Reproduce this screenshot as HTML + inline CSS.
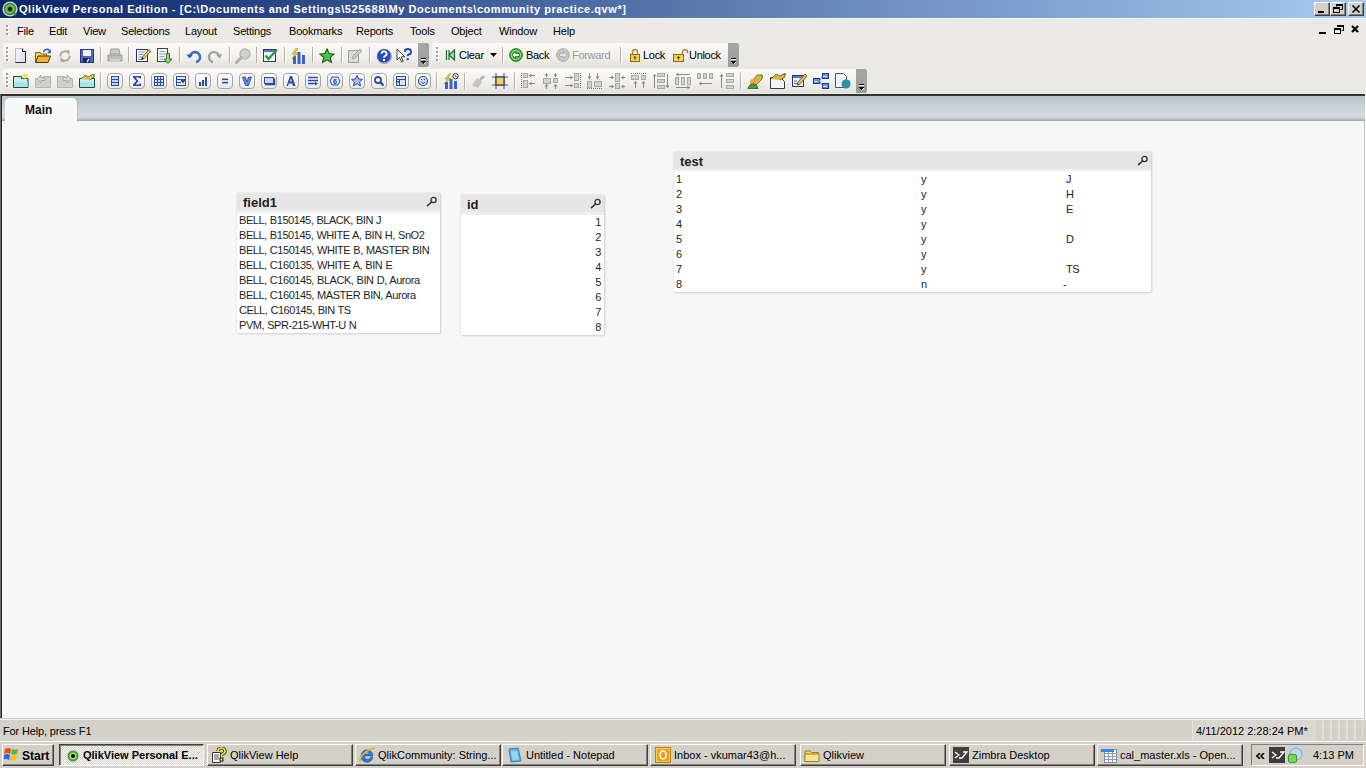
<!DOCTYPE html>
<html><head><meta charset="utf-8">
<style>
*{box-sizing:border-box}
html,body{margin:0;padding:0;width:1366px;height:768px;overflow:hidden;background:#f7f7f7;font-family:"Liberation Sans",sans-serif;font-size:11px;color:#000}
.a{position:absolute}
#title{left:0;top:0;width:1366px;height:18px;background:linear-gradient(to right,#0a246a 0%,#a6caf0 100%)}
#title .t{left:19px;top:3px;color:#fff;font-weight:bold;font-size:11px;line-height:13px;white-space:nowrap;letter-spacing:0.55px}
.cb{top:2px;width:16px;height:14px;background:#d4d0c8;border-top:1px solid #fff;border-left:1px solid #fff;border-right:1px solid #404040;border-bottom:1px solid #404040;box-shadow:inset -1px -1px #808080}
#menu{left:0;top:18px;width:1366px;height:76px;background:linear-gradient(#f4f5ee 0,#f4f5ee 1px,#eceae6 1px,#ebe9e4 100%)}
.mi{top:7px;white-space:nowrap;font-size:11px;letter-spacing:-0.2px}
.tb{height:24px;background:linear-gradient(#fbfaf8,#f0efea 60%,#e3e0d8);border-radius:3px 0 0 3px}
.chev{width:11px;height:24px;background:linear-gradient(#a8a8a8,#8a8a8a);border-radius:0 3px 3px 0}
.grip{width:2px;height:14px;background:repeating-linear-gradient(#9a9a9a 0 2px,transparent 2px 4px)}
.tt{white-space:nowrap;font-size:11px;letter-spacing:-0.3px;line-height:13px}
.sep{width:1px;height:16px;background:#b5b2aa}
#tabs{left:0;top:94px;width:1365px;height:27px;background:linear-gradient(#2a2a2a 0,#3a3a3a 2px,#b6c3cb 2px,#c6d0d6 40%,#d3dadf 75%,#cfd5d9 88%,#a2a6aa 100%)}
#sheet{left:0;top:121px;width:1365px;height:598px;background:#f7f7f7;border-right:1px solid #cacaca;border-bottom:1px solid #cacaca}
#lborder{left:0;top:94px;width:2px;height:624px;background:linear-gradient(to right,#6a6a6a 0,#6a6a6a 1px,#262626 1px)}
#status{left:0;top:719px;width:1366px;height:23px;background:#d4d1c9;border-top:1px solid #f4f3ef;border-bottom:1px solid #f8f8f4}
#task{left:0;top:742px;width:1366px;height:26px;background:#d4d0c8}
.lb{background:#fff;box-shadow:0 0 2px rgba(0,0,0,.12),1px 1px 2px rgba(0,0,0,.12)}
.cap{background:#e6e6e6;font-weight:bold;font-size:13px;color:#222}
.rows{white-space:nowrap;font-size:11px;line-height:15px;color:#1e1e1e;letter-spacing:-0.45px;word-spacing:0.5px}
.capt{font-weight:bold;font-size:13px;line-height:17px;color:#1e1e1e}
.tbtn{top:2px;width:146px;height:22px;background:#d4d0c8;border-top:1px solid #fff;border-left:1px solid #fff;border-right:1px solid #404040;border-bottom:1px solid #404040;box-shadow:inset -1px -1px #808080}
.st{white-space:nowrap;font-size:11px;letter-spacing:-0.3px;line-height:13px}
.tk{white-space:nowrap;font-size:11px;letter-spacing:0;line-height:13px}
.btn{height:22px;top:3px;background:#d4d0c8;border-top:1px solid #fff;border-left:1px solid #fff;border-right:1px solid #404040;border-bottom:1px solid #404040;box-shadow:inset -1px -1px #808080;white-space:nowrap;font-size:11px;padding-left:22px;padding-top:4px;overflow:hidden}
</style></head><body>

<!-- Title bar -->
<div id="title" class="a">
  <svg class="a" style="left:2px;top:1px" width="16" height="16"><circle cx="8" cy="8" r="7.6" fill="#c9d6cf"/><circle cx="8" cy="8" r="6.2" fill="#3d8a2e"/><circle cx="8" cy="8" r="4.6" fill="#8cc46a"/><circle cx="8" cy="8" r="3.2" fill="#4a9a38"/><circle cx="8" cy="8" r="2" fill="#101010"/><path d="M10.5 10.5l3.5 3.5" stroke="#3d8a2e" stroke-width="2"/></svg>
  <div class="t a">QlikView Personal Edition - [C:\Documents and Settings\525688\My Documents\community practice.qvw*]</div>
  <div class="cb a" style="left:1314px"><svg class="a" style="left:0;top:0" width="14" height="12"><rect x="3" y="8" width="6" height="2" fill="#000"/></svg></div>
  <div class="cb a" style="left:1330px"><svg class="a" style="left:0;top:0" width="14" height="12"><path d="M5.5 1.5h6v5h-2M5.5 1.5v2" fill="none" stroke="#000"/><rect x="5" y="1" width="7" height="2" fill="#000"/><rect x="2.5" y="4.5" width="6" height="5" fill="none" stroke="#000"/><rect x="2" y="4" width="7" height="2" fill="#000"/></svg></div>
  <div class="cb a" style="left:1348px"><svg class="a" style="left:0;top:0" width="14" height="12"><path d="M3.5 2.5l7 7M10.5 2.5l-7 7" stroke="#000" stroke-width="1.6"/></svg></div>
</div>

<!-- Menu -->
<div id="menu" class="a">
  <div class="a" style="left:6px;top:7px;width:2px;height:2px;background:#a09d96;box-shadow:1px 1px #fff,0 4px #a09d96,1px 5px #fff,0 8px #a09d96,1px 9px #fff"></div>
  <div class="mi a" style="left:17px">File</div>
  <div class="mi a" style="left:49px">Edit</div>
  <div class="mi a" style="left:83px">View</div>
  <div class="mi a" style="left:121px">Selections</div>
  <div class="mi a" style="left:185px">Layout</div>
  <div class="mi a" style="left:233px">Settings</div>
  <div class="mi a" style="left:289px">Bookmarks</div>
  <div class="mi a" style="left:356px">Reports</div>
  <div class="mi a" style="left:410px">Tools</div>
  <div class="mi a" style="left:451px">Object</div>
  <div class="mi a" style="left:499px">Window</div>
  <div class="mi a" style="left:553px">Help</div>
  <svg class="a" style="left:1316px;top:5px" width="48" height="14"><rect x="3" y="9" width="7" height="2" fill="#000"/><path d="M21.5 2.5h6v5h-2" fill="none" stroke="#000"/><rect x="21" y="2" width="7" height="2" fill="#000"/><rect x="18.5" y="5.5" width="6" height="5" fill="none" stroke="#000"/><rect x="18" y="5" width="7" height="2" fill="#000"/><path d="M36 3l6 6M42 3l-6 6" stroke="#000" stroke-width="2.2"/></svg>
</div>

<!-- Toolbar 1 -->
<div class="tb a" style="left:3px;top:43px;width:415px"></div>
<div class="chev a" style="left:418px;top:43px"></div>
<div class="tb a" style="left:432px;top:43px;width:296px"></div>
<div class="chev a" style="left:728px;top:43px"></div>

<!-- Toolbar 2 -->
<div class="tb a" style="left:3px;top:69px;width:853px"></div>
<div class="chev a" style="left:856px;top:69px"></div>

<svg width="0" height="0" style="position:absolute"><defs><linearGradient id="rb" x1="0" y1="0" x2="0" y2="1"><stop offset="0" stop-color="#ffffff"/><stop offset="1" stop-color="#e4e8f4"/></linearGradient><linearGradient id="pg" x1="0" y1="0" x2="1" y2="1"><stop offset="0" stop-color="#ffffff"/><stop offset="1" stop-color="#d8dcf0"/></linearGradient></defs></svg><div class="a" style="left:418px;top:43px;width:11px;height:24px;background:linear-gradient(#a6a6a6,#9c9c9c);border-radius:0 3px 3px 0"><svg class="a" style="left:0;top:0" width="11" height="24"><rect x="3" y="15" width="5" height="1" fill="#000"/><rect x="3" y="16" width="5" height="1" fill="#fff"/><path d="M2.5 18h6l-3 3z" fill="#000"/><path d="M6 21l2-2" stroke="#fff" stroke-width="1"/></svg></div>
<div class="a" style="left:728px;top:43px;width:11px;height:24px;background:linear-gradient(#a6a6a6,#9c9c9c);border-radius:0 3px 3px 0"><svg class="a" style="left:0;top:0" width="11" height="24"><rect x="3" y="15" width="5" height="1" fill="#000"/><rect x="3" y="16" width="5" height="1" fill="#fff"/><path d="M2.5 18h6l-3 3z" fill="#000"/><path d="M6 21l2-2" stroke="#fff" stroke-width="1"/></svg></div>
<div class="a" style="left:856px;top:69px;width:11px;height:24px;background:linear-gradient(#a6a6a6,#9c9c9c);border-radius:0 3px 3px 0"><svg class="a" style="left:0;top:0" width="11" height="24"><rect x="3" y="15" width="5" height="1" fill="#000"/><rect x="3" y="16" width="5" height="1" fill="#fff"/><path d="M2.5 18h6l-3 3z" fill="#000"/><path d="M6 21l2-2" stroke="#fff" stroke-width="1"/></svg></div>
<svg class="a" style="left:10px;top:48px" width="16" height="16" viewBox="0 0 16 16"><path d="M5.5 0.5h7l3 3v11h-10z" fill="url(#pg)" stroke="#b8b8c0"/><path d="M15.5 3.5v11h-10" fill="none" stroke="#2a2a2a"/><path d="M12.5 0.5v3h3" fill="#fff" stroke="#2a2a2a"/></svg>
<svg class="a" style="left:35px;top:48px" width="16" height="16" viewBox="0 0 16 16"><path d="M0.5 4.5h5l1 1.5h5v8.5h-11z" fill="#f0d46a" stroke="#7a6418"/><path d="M0.5 14.5l2.5-6.5h12.5l-2.5 6.5z" fill="#f2b032" stroke="#4a3408"/><path d="M8.5 4a3.5 3.5 0 0 1 6-1.5" fill="none" stroke="#2858b0" stroke-width="1.5"/><path d="M15.8 1.2v4h-4z" fill="#2858b0"/></svg>
<svg class="a" style="left:57px;top:48px" width="16" height="16" viewBox="0 0 16 16"><path d="M3.5 8.5a4.5 4.5 0 0 1 7.5-4" fill="none" stroke="#ababab" stroke-width="2"/><path d="M9 1.5l4 1.5-1 4z" fill="#a4a4a4"/><path d="M12.5 7.5a4.5 4.5 0 0 1-7.5 4" fill="none" stroke="#ababab" stroke-width="2"/><path d="M7 14.5l-4-1.5 1-4z" fill="#a4a4a4"/></svg>
<svg class="a" style="left:79px;top:48px" width="16" height="16" viewBox="0 0 16 16"><rect x="1.5" y="1.5" width="13" height="13" fill="#4a66c0" stroke="#28388a"/><rect x="4" y="2" width="8" height="6" fill="#eef0fa"/><rect x="4" y="10" width="7" height="4.5" fill="#1e2250"/><path d="M8 14l2-3" stroke="#dde" stroke-width="1.5"/></svg>
<svg class="a" style="left:107px;top:48px" width="16" height="16" viewBox="0 0 16 16"><path d="M4 1h8l1 5h-10z" fill="#c8c8c8" stroke="#9f9f9f"/><path d="M1 7h14v6h-14z" fill="#bdbdbd" stroke="#9f9f9f"/><path d="M3 11h10v3h-10z" fill="#d0d0d0"/></svg>
<svg class="a" style="left:136px;top:48px" width="16" height="16" viewBox="0 0 16 16"><rect x="0.5" y="1.5" width="11" height="12" fill="#f8f9ff" stroke="#2a3460"/><path d="M2.5 4h6M2.5 6.5h5M2.5 9h4M2.5 11.5h3" stroke="#7a8ac0"/><path d="M5.5 11.5l1-2.5 6.5-7.5 1.8 1.6-6.5 7.5z" fill="#f0d070" stroke="#5a4a20" stroke-width="0.8"/><path d="M5.2 12l1.2-2.8 1.7 1.5z" fill="#222"/></svg>
<svg class="a" style="left:157px;top:48px" width="16" height="16" viewBox="0 0 16 16"><rect x="0.5" y="0.5" width="10" height="13" fill="#f8f9ff" stroke="#3a4060"/><path d="M2.5 3.5h6M2.5 6h6M2.5 8.5h5M2.5 11h4" stroke="#8a9ac0"/><path d="M9.5 5.5h3v5.5h2.5l-4 4.5-4-4.5h2.5z" fill="#9ad27a" stroke="#2a6a1a" stroke-width="0.9"/></svg>
<svg class="a" style="left:186px;top:48px" width="16" height="16" viewBox="0 0 16 16"><path d="M4 9a5 5 0 1 1 6 5" fill="none" stroke="#3a6ec8" stroke-width="2.6"/><path d="M0.5 6.5h6.5l-3.5 4z" fill="#2a5ab8"/></svg>
<svg class="a" style="left:207px;top:48px" width="16" height="16" viewBox="0 0 16 16"><path d="M12 9a5 5 0 1 0 -6 5" fill="none" stroke="#9f9f9f" stroke-width="2.4"/><path d="M15.5 6.5h-6.5l3.5 4z" fill="#9f9f9f"/></svg>
<svg class="a" style="left:235px;top:48px" width="16" height="16" viewBox="0 0 16 16"><circle cx="10" cy="6" r="5" fill="#d0d0d0" stroke="#b8b8b8" stroke-width="1.5"/><path d="M6.5 9.5l-5 5" stroke="#b0b0b0" stroke-width="3" stroke-linecap="round"/></svg>
<svg class="a" style="left:263px;top:48px" width="16" height="16" viewBox="0 0 16 16"><rect x="0.5" y="1.5" width="12" height="12" fill="#eef2fb" stroke="#2a3a70"/><rect x="1" y="2" width="11" height="2" fill="#5a7ad0"/><path d="M2.5 7.5l3 3.5 8.5-9.5" fill="none" stroke="#1ea02a" stroke-width="2.2"/></svg>
<svg class="a" style="left:290px;top:48px" width="16" height="16" viewBox="0 0 16 16"><rect x="3" y="8" width="3" height="8" fill="#3a62c8"/><rect x="7.5" y="4" width="3" height="12" fill="#3a62c8"/><rect x="12" y="7" width="3" height="9" fill="#3a62c8"/><path d="M6 0l-4 6h3l-3 5 6-6h-3l3-5z" fill="#f4d23a" stroke="#9a8010" stroke-width="0.5"/></svg>
<svg class="a" style="left:319px;top:48px" width="16" height="16" viewBox="0 0 16 16"><path d="M8 1l2.1 4.6 5 .5-3.8 3.3 1.1 4.9L8 11.8l-4.4 2.5 1.1-4.9L.9 6.1l5-.5z" fill="#4ec24a" stroke="#1d5a1a" stroke-width="1.1"/></svg>
<svg class="a" style="left:347px;top:48px" width="16" height="16" viewBox="0 0 16 16"><rect x="1.5" y="2.5" width="10" height="12" fill="#dcdcdc" stroke="#9f9f9f"/><path d="M5 11l1-3 7-7 2 2-7 7z" fill="#cfcfcf" stroke="#9f9f9f" stroke-width="0.9"/></svg>
<svg class="a" style="left:376px;top:48px" width="16" height="16" viewBox="0 0 16 16"><circle cx="8" cy="8" r="7.3" fill="#2850b8" stroke="#e0e8ff" stroke-width="1"/><circle cx="8.5" cy="8.5" r="7" fill="none" stroke="#1a2a60" stroke-width="0.6" opacity=".6"/><path d="M5.6 5.8a2.5 2.4 0 1 1 3.4 2.2c-.8.4-1 .8-1 1.7" fill="none" stroke="#fff" stroke-width="1.8"/><rect x="7" y="11" width="2" height="2" fill="#fff"/></svg>
<svg class="a" style="left:396px;top:48px" width="16" height="16" viewBox="0 0 16 16"><path d="M1 1v11l2.5-2.5 2 4.5 1.8-.8-2-4.4h3.5z" fill="#fff" stroke="#333" stroke-width="0.9"/><path d="M9 4a3 2.8 0 1 1 3.6 2.6c-.8.4-1 .8-1 1.6" fill="none" stroke="#2850b8" stroke-width="2"/><rect x="10.6" y="10" width="2.2" height="2.2" fill="#2850b8"/></svg>
<div class="a" style="left:100px;top:47px;width:1px;height:16px;background:#b4b1a9;box-shadow:1px 0 #fff"></div>
<div class="a" style="left:128px;top:47px;width:1px;height:16px;background:#b4b1a9;box-shadow:1px 0 #fff"></div>
<div class="a" style="left:179px;top:47px;width:1px;height:16px;background:#b4b1a9;box-shadow:1px 0 #fff"></div>
<div class="a" style="left:229px;top:47px;width:1px;height:16px;background:#b4b1a9;box-shadow:1px 0 #fff"></div>
<div class="a" style="left:256px;top:47px;width:1px;height:16px;background:#b4b1a9;box-shadow:1px 0 #fff"></div>
<div class="a" style="left:284px;top:47px;width:1px;height:16px;background:#b4b1a9;box-shadow:1px 0 #fff"></div>
<div class="a" style="left:312px;top:47px;width:1px;height:16px;background:#b4b1a9;box-shadow:1px 0 #fff"></div>
<div class="a" style="left:341px;top:47px;width:1px;height:16px;background:#b4b1a9;box-shadow:1px 0 #fff"></div>
<div class="a" style="left:369px;top:47px;width:1px;height:16px;background:#b4b1a9;box-shadow:1px 0 #fff"></div>
<div class="a" style="left:6px;top:47px;width:2px;height:2px;background:#a09d96;box-shadow:1px 1px #fff"></div><div class="a" style="left:6px;top:51px;width:2px;height:2px;background:#a09d96;box-shadow:1px 1px #fff"></div><div class="a" style="left:6px;top:55px;width:2px;height:2px;background:#a09d96;box-shadow:1px 1px #fff"></div><div class="a" style="left:6px;top:59px;width:2px;height:2px;background:#a09d96;box-shadow:1px 1px #fff"></div>
<div class="a" style="left:436px;top:47px;width:2px;height:2px;background:#a09d96;box-shadow:1px 1px #fff"></div><div class="a" style="left:436px;top:51px;width:2px;height:2px;background:#a09d96;box-shadow:1px 1px #fff"></div><div class="a" style="left:436px;top:55px;width:2px;height:2px;background:#a09d96;box-shadow:1px 1px #fff"></div><div class="a" style="left:436px;top:59px;width:2px;height:2px;background:#a09d96;box-shadow:1px 1px #fff"></div>
<svg class="a" style="left:445px;top:49px" width="11" height="12" viewBox="0 0 11 12"><path d="M1.5 1v10M4 1v10M4 6l5.5-5v10z" fill="#a8e0a8" stroke="#1a6a2a" stroke-width="1.2"/></svg>
<div class="a tt" style="left:459px;top:49px">Clear</div>
<svg class="a" style="left:490px;top:53px" width="7" height="4"><path d="M0 0h7l-3.5 4z" fill="#000"/></svg>
<div class="a" style="left:502px;top:47px;width:1px;height:16px;background:#b4b1a9;box-shadow:1px 0 #fff"></div>
<svg class="a" style="left:509px;top:48px" width="14" height="14" viewBox="0 0 14 14"><circle cx="7" cy="7" r="6.3" fill="#3cba3c" stroke="#1a6a1a" stroke-width="1"/><circle cx="7" cy="7" r="4.6" fill="none" stroke="#b8f0b0" stroke-width="0.7"/><path d="M3 7l3.5-3.5v2h4v3h-4v2z" fill="#fff" stroke="#1a5a1a" stroke-width="0.7"/></svg>
<div class="a tt" style="left:526px;top:49px">Back</div>
<svg class="a" style="left:556px;top:48px" width="14" height="14" viewBox="0 0 14 14"><circle cx="7" cy="7" r="6.3" fill="#c8c8c8" stroke="#a8a8a8" stroke-width="1"/><path d="M11 7l-3.5-3.5v2h-4v3h4v2z" fill="#e4e4e4" stroke="#a0a0a0" stroke-width="0.7"/></svg>
<div class="a tt" style="left:572px;top:49px;color:#999">Forward</div>
<div class="a" style="left:620px;top:47px;width:1px;height:16px;background:#b4b1a9;box-shadow:1px 0 #fff"></div>
<svg class="a" style="left:629px;top:48px" width="12" height="15" viewBox="0 0 12 15"><path d="M3.5 6.5V4a2.5 2.5 0 0 1 5 0v2.5" fill="none" stroke="#a88a30" stroke-width="1.4"/><rect x="1.5" y="6.5" width="9" height="7" fill="#f4cc50" stroke="#8a6a18"/><path d="M6 8.5v3M4.8 9.7l1.2-1.2 1.2 1.2" stroke="#4a3000" fill="none"/></svg>
<div class="a tt" style="left:643px;top:49px">Lock</div>
<svg class="a" style="left:673px;top:48px" width="16" height="15" viewBox="0 0 16 15"><path d="M9.5 6.5V4a2.5 2.5 0 0 1 5 0v1.5" fill="none" stroke="#a88a30" stroke-width="1.4"/><rect x="0.5" y="6.5" width="10" height="7" fill="#f4cc50" stroke="#8a6a18"/><path d="M5.5 8.5v3M4.3 9.7l1.2-1.2 1.2 1.2" stroke="#4a3000" fill="none"/></svg>
<div class="a tt" style="left:689px;top:49px">Unlock</div>
<div class="a" style="left:6px;top:73px;width:2px;height:2px;background:#a09d96;box-shadow:1px 1px #fff"></div><div class="a" style="left:6px;top:77px;width:2px;height:2px;background:#a09d96;box-shadow:1px 1px #fff"></div><div class="a" style="left:6px;top:81px;width:2px;height:2px;background:#a09d96;box-shadow:1px 1px #fff"></div><div class="a" style="left:6px;top:85px;width:2px;height:2px;background:#a09d96;box-shadow:1px 1px #fff"></div>
<svg class="a" style="left:13px;top:73px" width="16" height="16" viewBox="0 0 16 16"><path d="M0.5 3.5h7.5v1.5h2v-1.5h0v11h-9.5z" fill="#cfeef2" stroke="none"/><path d="M0.5 3.5h8v2h6.5v9h-14.5z" fill="#c8eef0" stroke="#1a4a4a"/><path d="M1 9h13.5v5h-13.5z" fill="#a8e4e8"/><path d="M12 0v6M9 3h6M10 1l4 4M14 1l-4 4" stroke="#f0e040" stroke-width="1.1"/></svg>
<svg class="a" style="left:35px;top:73px" width="16" height="16" viewBox="0 0 16 16"><path d="M0.5 5.5h8v-2h7v11h-15z" fill="#cfcfcf" stroke="#b4b4b4"/><path d="M2 6l4-4v2.5h4v3h-4v2.5z" fill="#d8d8d8" stroke="#a8a8a8"/></svg>
<svg class="a" style="left:57px;top:73px" width="16" height="16" viewBox="0 0 16 16"><path d="M0.5 3.5h7v2h8v9h-15z" fill="#cfcfcf" stroke="#b4b4b4"/><path d="M14 6l-4-4v2.5h-4v3h4v2.5z" fill="#d8d8d8" stroke="#a8a8a8"/></svg>
<svg class="a" style="left:79px;top:73px" width="16" height="16" viewBox="0 0 16 16"><path d="M0.5 5.5h15v9h-15z" fill="#c8eef0" stroke="#1a4a4a"/><path d="M1 9h14v5h-14z" fill="#a8e4e8"/><path d="M2 6l4-4 3 2 5-3 1.5 3-5 3" fill="#d8c060" stroke="#6a5a20" stroke-width="0.8"/><path d="M13 1l2.5 0v3z" fill="#50a040"/></svg>
<div class="a" style="left:100px;top:73px;width:1px;height:16px;background:#b4b1a9;box-shadow:1px 0 #fff"></div>
<svg class="a" style="left:107px;top:73px" width="16" height="16" viewBox="0 0 16 16"><rect x="0.5" y="0.5" width="15" height="15" rx="3.5" fill="url(#rb)" stroke="#a8a49c"/><rect x="4.5" y="3.5" width="7" height="9" fill="#c8d8f8" stroke="#2a4a9a"/><path d="M5 6.5h6M5 9.5h6" stroke="#2a4a9a"/></svg>
<svg class="a" style="left:129px;top:73px" width="16" height="16" viewBox="0 0 16 16"><rect x="0.5" y="0.5" width="15" height="15" rx="3.5" fill="url(#rb)" stroke="#a8a49c"/><path d="M4 3h8v2.5h-1.5l-.5-1h-3.5l3 3.5-3 3.5h3.5l.5-1h1.5v2.5h-8v-1.5l3.2-3.5-3.2-3.5z" fill="#2a4a9a"/></svg>
<svg class="a" style="left:151px;top:73px" width="16" height="16" viewBox="0 0 16 16"><rect x="0.5" y="0.5" width="15" height="15" rx="3.5" fill="url(#rb)" stroke="#a8a49c"/><rect x="3.5" y="3.5" width="9" height="9" fill="#d0e0fc" stroke="#2a4a9a"/><path d="M6.5 3.5v9M9.5 3.5v9M3.5 6.5h9M3.5 9.5h9" stroke="#2a4a9a"/></svg>
<svg class="a" style="left:173px;top:73px" width="16" height="16" viewBox="0 0 16 16"><rect x="0.5" y="0.5" width="15" height="15" rx="3.5" fill="url(#rb)" stroke="#a8a49c"/><rect x="3.5" y="3.5" width="9" height="9" fill="#e0ecfc" stroke="#2a4a9a"/><path d="M4 6.5h8M4 9.5h4" stroke="#2a4a9a"/><path d="M7 6.5h6l-3 4z" fill="#2a4a9a"/></svg>
<svg class="a" style="left:195px;top:73px" width="16" height="16" viewBox="0 0 16 16"><rect x="0.5" y="0.5" width="15" height="15" rx="3.5" fill="url(#rb)" stroke="#a8a49c"/><rect x="4" y="9" width="2" height="4" fill="#2a4a9a"/><rect x="7" y="7" width="2" height="6" fill="#2a4a9a"/><rect x="10" y="4" width="2" height="9" fill="#2a4a9a"/></svg>
<svg class="a" style="left:217px;top:73px" width="16" height="16" viewBox="0 0 16 16"><rect x="0.5" y="0.5" width="15" height="15" rx="3.5" fill="url(#rb)" stroke="#a8a49c"/><rect x="5" y="5.5" width="6" height="1.6" fill="#2a4a9a"/><rect x="5" y="8.8" width="6" height="1.6" fill="#2a4a9a"/></svg>
<svg class="a" style="left:239px;top:73px" width="16" height="16" viewBox="0 0 16 16"><rect x="0.5" y="0.5" width="15" height="15" rx="3.5" fill="url(#rb)" stroke="#a8a49c"/><path d="M3.5 4h3l1.5 5 1.5-5h3l-3 8.5h-3z" fill="#6a86d0" stroke="#2a4a9a" stroke-width="0.8"/></svg>
<svg class="a" style="left:261px;top:73px" width="16" height="16" viewBox="0 0 16 16"><rect x="0.5" y="0.5" width="15" height="15" rx="3.5" fill="url(#rb)" stroke="#a8a49c"/><rect x="3.5" y="4.5" width="9" height="6" fill="#c8d8f8" stroke="#2a4a9a"/><path d="M4 11.5h9.5v-6" stroke="#2a4a9a" fill="none" stroke-width="1.4"/></svg>
<svg class="a" style="left:283px;top:73px" width="16" height="16" viewBox="0 0 16 16"><rect x="0.5" y="0.5" width="15" height="15" rx="3.5" fill="url(#rb)" stroke="#a8a49c"/><path d="M3.5 13l3.5-10h2l3.5 10h-2.5l-.8-2.5h-3.4l-.8 2.5z M7 8.5h2l-1-3z" fill="#2a4a9a" fill-rule="evenodd"/></svg>
<svg class="a" style="left:305px;top:73px" width="16" height="16" viewBox="0 0 16 16"><rect x="0.5" y="0.5" width="15" height="15" rx="3.5" fill="url(#rb)" stroke="#a8a49c"/><path d="M3 4.5h10M3 7.5h10M3 10.5h7" stroke="#2a4a9a" stroke-width="1.6"/><path d="M10 8.5l3 2-3 2z" fill="#2a4a9a"/></svg>
<svg class="a" style="left:327px;top:73px" width="16" height="16" viewBox="0 0 16 16"><rect x="0.5" y="0.5" width="15" height="15" rx="3.5" fill="url(#rb)" stroke="#a8a49c"/><path d="M3 8l2-4h6l2 4-2 4h-6z" fill="#d8e4fc" stroke="#2a4a9a"/><text x="8" y="11" font-size="7" text-anchor="middle" fill="#2a4a9a" font-family="Liberation Sans" font-weight="bold">6</text></svg>
<svg class="a" style="left:349px;top:73px" width="16" height="16" viewBox="0 0 16 16"><rect x="0.5" y="0.5" width="15" height="15" rx="3.5" fill="url(#rb)" stroke="#a8a49c"/><path d="M8 2.5l1.7 3.5 3.8.4-2.9 2.6.9 3.8L8 10.8 4.5 12.8l.9-3.8L2.5 6.4l3.8-.4z" fill="#a8c0f0" stroke="#2a4a9a" stroke-width="1"/></svg>
<svg class="a" style="left:371px;top:73px" width="16" height="16" viewBox="0 0 16 16"><rect x="0.5" y="0.5" width="15" height="15" rx="3.5" fill="url(#rb)" stroke="#a8a49c"/><circle cx="7" cy="7" r="3" fill="#fff" stroke="#2a4a9a" stroke-width="1.8"/><path d="M9 9l3.5 3.5" stroke="#2a4a9a" stroke-width="2.2"/></svg>
<svg class="a" style="left:393px;top:73px" width="16" height="16" viewBox="0 0 16 16"><rect x="0.5" y="0.5" width="15" height="15" rx="3.5" fill="url(#rb)" stroke="#a8a49c"/><rect x="3.5" y="3.5" width="9" height="9" fill="#d8e4fc" stroke="#2a4a9a"/><path d="M3.5 6.5h9M6.5 6.5v6" stroke="#2a4a9a"/><rect x="4" y="8" width="2" height="1.5" fill="#2a4a9a"/></svg>
<svg class="a" style="left:415px;top:73px" width="16" height="16" viewBox="0 0 16 16"><rect x="0.5" y="0.5" width="15" height="15" rx="3.5" fill="url(#rb)" stroke="#a8a49c"/><circle cx="8" cy="8" r="4.5" fill="#d8e4fc" stroke="#2a4a9a" stroke-width="1.2"/><path d="M5.8 8.8a2.4 2.4 0 0 0 4.4 0" fill="none" stroke="#2a4a9a"/><rect x="6" y="6" width="1.2" height="1.2" fill="#2a4a9a"/><rect x="8.8" y="6" width="1.2" height="1.2" fill="#2a4a9a"/></svg>
<div class="a" style="left:436px;top:73px;width:1px;height:16px;background:#b4b1a9;box-shadow:1px 0 #fff"></div>
<svg class="a" style="left:443px;top:73px" width="16" height="16" viewBox="0 0 16 16"><rect x="2" y="9" width="3" height="7" fill="#3a62c8"/><rect x="6.5" y="6" width="3" height="10" fill="#3a62c8"/><rect x="11" y="8" width="3" height="8" fill="#3a62c8"/><path d="M7 0l-5 6h3l-4 5 7-6h-3l3-5z" fill="#f4d23a" stroke="#8a7a10" stroke-width="0.5"/><circle cx="12.5" cy="3.2" r="2.7" fill="#fff" stroke="#222" stroke-width="1"/><path d="M12.5 2v1.5h1" stroke="#222" stroke-width="0.7" fill="none"/></svg>
<div class="a" style="left:464px;top:73px;width:1px;height:16px;background:#b4b1a9;box-shadow:1px 0 #fff"></div>
<svg class="a" style="left:471px;top:73px" width="16" height="16" viewBox="0 0 16 16"><path d="M1 12l5-7 5 4-4 6z" fill="#c4c4c4"/><path d="M8 6l4-4 2 2-4 4z" fill="#b4b4b4"/></svg>
<svg class="a" style="left:492px;top:73px" width="16" height="16" viewBox="0 0 16 16"><path d="M4 0v16M12 0v16M0 4h16M0 12h16" stroke="#3a4ac0" stroke-width="1"/><rect x="4" y="4" width="8" height="8" fill="#f0d060" stroke="#222"/></svg>
<div class="a" style="left:514px;top:73px;width:1px;height:16px;background:#b4b1a9;box-shadow:1px 0 #fff"></div>
<svg class="a" style="left:521px;top:73px" width="16" height="16" viewBox="0 0 16 16"><path d="M0.5 0V16" stroke="#777" stroke-dasharray="1 1"/><rect x="2.5" y="0.5" width="4" height="4" fill="#d2d2d2" stroke="#a8a8a8"/><rect x="2.5" y="7.5" width="4" height="7" fill="#d2d2d2" stroke="#a8a8a8"/><path d="M8 2.5h6" stroke="#8a8a8a"/><path d="M8 2.5l2.5-2v4z" fill="#8a8a8a"/><path d="M8 10.5h6" stroke="#8a8a8a"/><path d="M8 10.5l2.5-2v4z" fill="#8a8a8a"/></svg>
<svg class="a" style="left:543px;top:73px" width="16" height="16" viewBox="0 0 16 16"><path d="M3.5 0v4" stroke="#8a8a8a"/><path d="M3.5 4l-2-2.5h4z" fill="#8a8a8a"/><path d="M12.5 0v4" stroke="#8a8a8a"/><path d="M12.5 4l-2-2.5h4z" fill="#8a8a8a"/><rect x="0.5" y="5.5" width="7" height="5" fill="#d2d2d2" stroke="#a8a8a8"/><rect x="10.5" y="5.5" width="4" height="4" fill="#d2d2d2" stroke="#a8a8a8"/><path d="M3.5 11v5" stroke="#8a8a8a"/><path d="M3.5 11l-2 2.5h4z" fill="#8a8a8a"/><path d="M12.5 11v5" stroke="#8a8a8a"/><path d="M12.5 11l-2 2.5h4z" fill="#8a8a8a"/></svg>
<svg class="a" style="left:565px;top:73px" width="16" height="16" viewBox="0 0 16 16"><path d="M15.5 0V16" stroke="#777" stroke-dasharray="1 1"/><rect x="9.5" y="0.5" width="4" height="7" fill="#d2d2d2" stroke="#a8a8a8"/><rect x="9.5" y="10.5" width="4" height="4" fill="#d2d2d2" stroke="#a8a8a8"/><path d="M0 4.5h8" stroke="#8a8a8a"/><path d="M8 4.5l-2.5-2v4z" fill="#8a8a8a"/><path d="M0 12.5h8" stroke="#8a8a8a"/><path d="M8 12.5l-2.5-2v4z" fill="#8a8a8a"/></svg>
<svg class="a" style="left:587px;top:73px" width="16" height="16" viewBox="0 0 16 16"><path d="M0 15.5H16" stroke="#777" stroke-dasharray="1 1"/><path d="M2.5 0v6" stroke="#8a8a8a"/><path d="M2.5 6l-2-2.5h4z" fill="#8a8a8a"/><path d="M10.5 0v6" stroke="#8a8a8a"/><path d="M10.5 6l-2-2.5h4z" fill="#8a8a8a"/><rect x="0.5" y="8.5" width="4" height="6" fill="#d2d2d2" stroke="#a8a8a8"/><rect x="7.5" y="8.5" width="7" height="5" fill="#d2d2d2" stroke="#a8a8a8"/></svg>
<svg class="a" style="left:609px;top:73px" width="16" height="16" viewBox="0 0 16 16"><rect x="6.5" y="0.5" width="4" height="8" fill="#d2d2d2" stroke="#a8a8a8"/><rect x="6.5" y="10.5" width="4" height="5" fill="#d2d2d2" stroke="#a8a8a8"/><path d="M0 4.5h5" stroke="#8a8a8a"/><path d="M5 4.5l-2.5-2v4z" fill="#8a8a8a"/><path d="M12 4.5h4" stroke="#8a8a8a"/><path d="M12 4.5l2.5-2v4z" fill="#8a8a8a"/><path d="M0 13.5h5" stroke="#8a8a8a"/><path d="M5 13.5l-2.5-2v4z" fill="#8a8a8a"/><path d="M12 13.5h4" stroke="#8a8a8a"/><path d="M12 13.5l2.5-2v4z" fill="#8a8a8a"/></svg>
<svg class="a" style="left:631px;top:73px" width="16" height="16" viewBox="0 0 16 16"><path d="M0 0.5H16" stroke="#777" stroke-dasharray="1 1"/><rect x="0.5" y="2.5" width="7" height="4" fill="#d2d2d2" stroke="#a8a8a8"/><rect x="10.5" y="2.5" width="4" height="4" fill="#d2d2d2" stroke="#a8a8a8"/><path d="M4.5 8v7" stroke="#8a8a8a"/><path d="M4.5 8l-2 2.5h4z" fill="#8a8a8a"/><path d="M12.5 8v7" stroke="#8a8a8a"/><path d="M12.5 8l-2 2.5h4z" fill="#8a8a8a"/></svg>
<svg class="a" style="left:653px;top:73px" width="16" height="16" viewBox="0 0 16 16"><path d="M1.5 1v14" stroke="#8a8a8a"/><path d="M1.5 1l-2 2.5h4z" fill="#8a8a8a"/><path d="M14.5 1v14" stroke="#8a8a8a"/><path d="M14.5 15l-2-2.5h4z" fill="#8a8a8a"/><rect x="4.5" y="0.5" width="7" height="3" fill="#d2d2d2" stroke="#a8a8a8"/><rect x="4.5" y="6.5" width="7" height="3" fill="#d2d2d2" stroke="#a8a8a8"/><rect x="4.5" y="12.5" width="7" height="3" fill="#d2d2d2" stroke="#a8a8a8"/></svg>
<svg class="a" style="left:675px;top:73px" width="16" height="16" viewBox="0 0 16 16"><path d="M1 1.5h14" stroke="#8a8a8a"/><path d="M1 1.5l2.5-2v4z" fill="#8a8a8a"/><path d="M1 14.5h14" stroke="#8a8a8a"/><path d="M15 14.5l-2.5-2v4z" fill="#8a8a8a"/><rect x="0.5" y="4.5" width="3" height="7" fill="#d2d2d2" stroke="#a8a8a8"/><rect x="6.5" y="4.5" width="3" height="7" fill="#d2d2d2" stroke="#a8a8a8"/><rect x="12.5" y="4.5" width="3" height="7" fill="#d2d2d2" stroke="#a8a8a8"/></svg>
<svg class="a" style="left:697px;top:73px" width="16" height="16" viewBox="0 0 16 16"><rect x="0.5" y="0.5" width="3" height="5" fill="#d2d2d2" stroke="#a8a8a8"/><rect x="6.5" y="0.5" width="3" height="5" fill="#d2d2d2" stroke="#a8a8a8"/><rect x="12.5" y="0.5" width="3" height="5" fill="#d2d2d2" stroke="#a8a8a8"/><path d="M2 10.5h13" stroke="#8a8a8a"/><path d="M2 10.5l2.5-2v4z" fill="#8a8a8a"/></svg>
<svg class="a" style="left:719px;top:73px" width="16" height="16" viewBox="0 0 16 16"><path d="M2.5 1v14" stroke="#8a8a8a"/><path d="M2.5 1l-2 2.5h4z" fill="#8a8a8a"/><rect x="7.5" y="0.5" width="7" height="3" fill="#d2d2d2" stroke="#a8a8a8"/><rect x="7.5" y="6.5" width="7" height="3" fill="#d2d2d2" stroke="#a8a8a8"/><rect x="7.5" y="12.5" width="7" height="3" fill="#d2d2d2" stroke="#a8a8a8"/></svg>
<div class="a" style="left:740px;top:73px;width:1px;height:16px;background:#b4b1a9;box-shadow:1px 0 #fff"></div>
<svg class="a" style="left:747px;top:73px" width="16" height="16" viewBox="0 0 16 16"><path d="M4 10l6-8h5v4l-6 6z" fill="#d8b840" stroke="#6a5a10" stroke-width="0.8"/><circle cx="6" cy="9" r="3" fill="#f0a040"/><path d="M1 16q1-5 5-5t5 5z" fill="#40a040" stroke="#1a5a1a" stroke-width="0.8"/><path d="M13 2l3 0v3z" fill="#50a040"/></svg>
<svg class="a" style="left:770px;top:73px" width="16" height="16" viewBox="0 0 16 16"><path d="M0.5 4.5h10l4 4v7h-14z" fill="#f4f4f8" stroke="#3a3a3a"/><path d="M1 6l5-5 4 2 4-2 1 3-5 3" fill="#d8b840" stroke="#6a5a10" stroke-width="0.8"/><path d="M13 0l3 0v3z" fill="#50a040"/></svg>
<svg class="a" style="left:792px;top:73px" width="16" height="16" viewBox="0 0 16 16"><rect x="0.5" y="2.5" width="11" height="11" fill="#eef2fb" stroke="#2a3a70"/><rect x="1" y="3" width="10" height="2" fill="#5a7ad0"/><path d="M2 8h3M2 10.5h3" stroke="#5a7ad0"/><path d="M5 12l1-3 7-8 2 2-7 8z" fill="#e8c060" stroke="#4a3a10" stroke-width="0.8"/></svg>
<svg class="a" style="left:813px;top:73px" width="16" height="16" viewBox="0 0 16 16"><rect x="0.5" y="5.5" width="6" height="5" fill="#6a90e0" stroke="#1a3a8a"/><rect x="9.5" y="0.5" width="6" height="5" fill="#6a90e0" stroke="#1a3a8a"/><rect x="9.5" y="10.5" width="6" height="5" fill="#6a90e0" stroke="#1a3a8a"/><path d="M6.5 8l3-5M6.5 8l3 5" stroke="#6a90e0"/><rect x="1.5" y="8" width="3" height="1" fill="#fff"/><rect x="10.5" y="3" width="3" height="1" fill="#fff"/><rect x="10.5" y="13" width="3" height="1" fill="#fff"/></svg>
<svg class="a" style="left:835px;top:73px" width="16" height="16" viewBox="0 0 16 16"><path d="M0.5 0.5h8l3 3v11h-11z" fill="#f4f6fc" stroke="#555"/><circle cx="11" cy="11" r="4.5" fill="#2a8ac8"/><path d="M8 9q3 1 3 4M10 7q3 2 5 1" stroke="#3aa040" stroke-width="1.5" fill="none"/></svg>
<!-- Tabs -->
<div id="tabs" class="a">
  <div class="a" style="left:5px;top:4px;width:72px;height:23px;background:linear-gradient(#fdfeff,#f7f7f7 30%);border-radius:5px 5px 0 0;box-shadow:1px 0 1px rgba(0,0,0,.12)"></div>
  <div class="a" style="left:25px;top:9px;font-weight:bold;font-size:12px;line-height:14px;color:#111">Main</div>
</div>

<!-- Sheet -->
<div id="sheet" class="a"></div>
<div id="lborder" class="a"></div>

<!-- field1 listbox -->
<div class="lb a" style="left:237px;top:193px;width:203px;height:140px">
  <div class="cap a" style="left:0;top:0;width:203px;height:17px"></div>
  <div class="a" style="left:0;top:17px;width:203px;height:3px;background:#efefef"></div>
  <div class="a capt" style="left:6px;top:1px">field1</div>
  <div class="a rows" style="left:2px;top:20px">BELL, B150145, BLACK, BIN J<br>BELL, B150145, WHITE A, BIN H, SnO2<br>BELL, C150145, WHITE B, MASTER BIN<br>BELL, C160135, WHITE A, BIN E<br>BELL, C160145, BLACK, BIN D, Aurora<br>BELL, C160145, MASTER BIN, Aurora<br>CELL, C160145, BIN TS<br>PVM, SPR-215-WHT-U N</div>
  <svg class="a" style="left:189px;top:3px" width="12" height="11" viewBox="0 0 12 11"><circle cx="7.5" cy="4" r="2.6" fill="none" stroke="#333" stroke-width="1.3"/><line x1="5.6" y1="6" x2="1.5" y2="9.6" stroke="#333" stroke-width="1.6" stroke-linecap="round"/></svg>
</div>

<!-- id listbox -->
<div class="lb a" style="left:461px;top:195px;width:143px;height:140px">
  <div class="cap a" style="left:0;top:0;width:143px;height:17px"></div>
  <div class="a" style="left:0;top:17px;width:143px;height:3px;background:#efefef"></div>
  <div class="a capt" style="left:6px;top:1px">id</div>
  <div class="a rows" style="right:3px;top:20px;text-align:right">1<br>2<br>3<br>4<br>5<br>6<br>7<br>8</div>
  <svg class="a" style="left:129px;top:3px" width="12" height="11" viewBox="0 0 12 11"><circle cx="7.5" cy="4" r="2.6" fill="none" stroke="#333" stroke-width="1.3"/><line x1="5.6" y1="6" x2="1.5" y2="9.6" stroke="#333" stroke-width="1.6" stroke-linecap="round"/></svg>
</div>

<!-- test table -->
<div class="lb a" style="left:674px;top:152px;width:477px;height:140px">
  <div class="cap a" style="left:0;top:0;width:477px;height:17px"></div>
  <div class="a" style="left:0;top:17px;width:477px;height:2px;background:#efefef"></div>
  <div class="a capt" style="left:6px;top:1px">test</div>
  <div class="a rows" style="left:2px;top:20px">1<br>2<br>3<br>4<br>5<br>6<br>7<br>8</div>
  <div class="a rows" style="left:247px;top:20px">y<br>y<br>y<br>y<br>y<br>y<br>y<br>n</div>
  <div class="a rows" style="left:392px;top:20px">J<br>H<br>E<br>&nbsp;<br>D<br>&nbsp;<br>TS<br><span style="margin-left:-3px">-</span></div>
  <svg class="a" style="left:463px;top:3px" width="12" height="11" viewBox="0 0 12 11"><circle cx="7.5" cy="4" r="2.6" fill="none" stroke="#333" stroke-width="1.3"/><line x1="5.6" y1="6" x2="1.5" y2="9.6" stroke="#333" stroke-width="1.6" stroke-linecap="round"/></svg>
</div>


<!-- Status -->
<div id="status" class="a">
  <div class="a st" style="left:3px;top:5px;letter-spacing:-0.15px">For Help, press F1</div>
  <div class="a" style="left:1192px;top:0;width:124px;height:21px;background:#dad7d0;border-left:1px solid #e6e4de"></div>
  <div class="a st" style="left:1196px;top:5px;letter-spacing:0">4/11/2012 2:28:24 PM*</div>
  <svg class="a" style="left:1318px;top:1px" width="48" height="21"><path d="M4.5 0v21M5.5 0v21M12.5 0v21M13.5 0v21M20.5 0v21M21.5 0v21M28.5 0v21M29.5 0v21M36.5 0v21M37.5 0v21M44.5 0v21" stroke="#e2e0da" stroke-width="1"/></svg>
</div>

<!-- Taskbar -->
<div id="task" class="a">
  <div class="btn a" style="left:2px;top:2px;width:52px;height:22px"></div>
  <svg class="a" style="left:4px;top:5px" width="16" height="14"><path d="M1 2q3-2 6 0l-1 5q-3-2-6 0z" fill="#e8501a"/><path d="M8 2q3 1.5 6 0l-1 5q-3 1.5-6 0z" fill="#60b828"/><path d="M0 8q3-2 6 0l-1 5q-3-2-6 0z" fill="#2a6ad8"/><path d="M7 8q3 1.5 6 0l-1 5q-3 1.5-6 0z" fill="#f4c018"/></svg>
  <div class="a" style="left:22px;top:8px;font-weight:bold;font-size:12px;line-height:13px">Start</div>

  <div class="a" style="left:59px;top:2px;width:145px;height:22px;border-top:1px solid #404040;border-left:1px solid #404040;border-right:1px solid #fff;border-bottom:1px solid #fff;box-shadow:inset 1px 1px #808080;background:repeating-conic-gradient(#fff 0 25%,#d4d0c8 0 50%) 0 0/2px 2px"></div>
  <svg class="a" style="left:65px;top:6px" width="16" height="16"><circle cx="8" cy="8" r="7" fill="#d8e8d8"/><circle cx="8" cy="8" r="5.5" fill="#4a9a38"/><circle cx="8" cy="8" r="3.5" fill="#a8d888"/><circle cx="8" cy="8" r="2" fill="#111"/></svg>
  <div class="a tk" style="left:83px;top:7px;font-weight:bold;letter-spacing:0">QlikView Personal E...</div>

  <div class="tbtn a" style="left:207px"></div>
  <svg class="a" style="left:211px;top:5px" width="16" height="16"><path d="M1.5 5.5h8v10h-8z" fill="#fff" stroke="#333"/><path d="M3 8h5M3 10h5M3 12h5" stroke="#555"/><path d="M7 4a3.5 3 0 1 1 4.5 3c-1 .5-1.2 1-1.2 2" fill="none" stroke="#1a1a1a" stroke-width="3.2"/><path d="M7 4a3.5 3 0 1 1 4.5 3c-1 .5-1.2 1-1.2 2" fill="none" stroke="#f0e030" stroke-width="1.8"/><rect x="9" y="11" width="3" height="3" fill="#f0e030" stroke="#1a1a1a"/></svg>
  <div class="a tk" style="left:230px;top:7px">QlikView Help</div>

  <div class="tbtn a" style="left:355px"></div>
  <svg class="a" style="left:358px;top:4px" width="18" height="18"><path d="M3 9.5a6 6 0 1 1 12 0.5h-8.5a3.2 3.2 0 0 0 6.2 1.2h2.2a6 6 0 0 1-11.9-1.7z M6.6 8h5a2.6 2.6 0 0 0-5 0z" fill="#2a78d8" stroke="#1a4a9a" stroke-width="0.5" fill-rule="evenodd"/><path d="M1.5 16q1-10 15-14" fill="none" stroke="#f0b020" stroke-width="1.5"/></svg>
  <div class="a tk" style="left:378px;top:7px">QlikCommunity: String...</div>

  <div class="tbtn a" style="left:502px"></div>
  <svg class="a" style="left:507px;top:5px" width="16" height="16"><path d="M2 2l9-1 3 13-10 1z" fill="#5ab0e8" stroke="#3a80c0"/><path d="M4 4l6-.5 2 9-6.5.7z" fill="#9ad4f4"/></svg>
  <div class="a tk" style="left:526px;top:7px">Untitled - Notepad</div>

  <div class="tbtn a" style="left:650px"></div>
  <svg class="a" style="left:655px;top:5px" width="16" height="16"><rect x="0.5" y="0.5" width="15" height="15" fill="#f8d040" stroke="#c08010"/><rect x="2" y="2" width="12" height="12" fill="#f0a020"/><ellipse cx="8" cy="8" rx="3" ry="4" fill="none" stroke="#fff" stroke-width="1.6"/></svg>
  <div class="a tk" style="left:674px;top:7px">Inbox - vkumar43@h...</div>

  <div class="tbtn a" style="left:800px"></div>
  <svg class="a" style="left:804px;top:5px" width="16" height="16"><path d="M1 4h5l1.5 1.5h7v9h-13.5z" fill="#f0d060" stroke="#a08020"/><path d="M1 7h14v7.5h-14z" fill="#f8e48a" stroke="#a08020"/></svg>
  <div class="a tk" style="left:823px;top:7px">Qlikview</div>

  <div class="tbtn a" style="left:949px"></div>
  <svg class="a" style="left:953px;top:5px" width="16" height="16"><rect x="0" y="0" width="16" height="16" fill="#404040"/><path d="M2 5l4 3-4 3M6 11h3l5-6h-4" fill="none" stroke="#fff" stroke-width="1.3"/></svg>
  <div class="a tk" style="left:972px;top:7px">Zimbra Desktop</div>

  <div class="tbtn a" style="left:1097px"></div>
  <svg class="a" style="left:1101px;top:5px" width="16" height="16"><rect x="3.5" y="2.5" width="12" height="13" fill="#fff" stroke="#7a8aa0"/><path d="M3.5 6.5h12M3.5 9.5h12M3.5 12.5h12M7.5 2.5v13M11.5 2.5v13" stroke="#8a9ab0"/><rect x="0" y="2" width="13" height="3" fill="#3a8ad8"/></svg>
  <div class="a tk" style="left:1120px;top:7px">cal_master.xls - Open...</div>

  <div class="a" style="left:1251px;top:2px;width:113px;height:22px;border-top:1px solid #808080;border-left:1px solid #808080;border-right:1px solid #fff;border-bottom:1px solid #fff"></div>
  <svg class="a" style="left:1256px;top:11px" width="9" height="6"><path d="M4 0l-3 3 3 3M8 0l-3 3 3 3" fill="none" stroke="#000" stroke-width="1.6"/></svg>
  <svg class="a" style="left:1269px;top:5px" width="16" height="16"><rect x="0" y="0" width="16" height="16" fill="#3c3c3c"/><path d="M3 5l4 3-4 3M7 11h3l5-6h-4" fill="none" stroke="#fff" stroke-width="1.3"/></svg>
  <svg class="a" style="left:1287px;top:5px" width="16" height="16"><circle cx="9" cy="7" r="6" fill="#b8d8f4" stroke="#7aa8d8"/><rect x="1.5" y="7.5" width="8" height="8" rx="1.5" fill="#7ad858" stroke="#3a9a28"/></svg>
  <div class="a tk" style="left:1313px;top:7px">4:13 PM</div>
</div>

</body></html>
